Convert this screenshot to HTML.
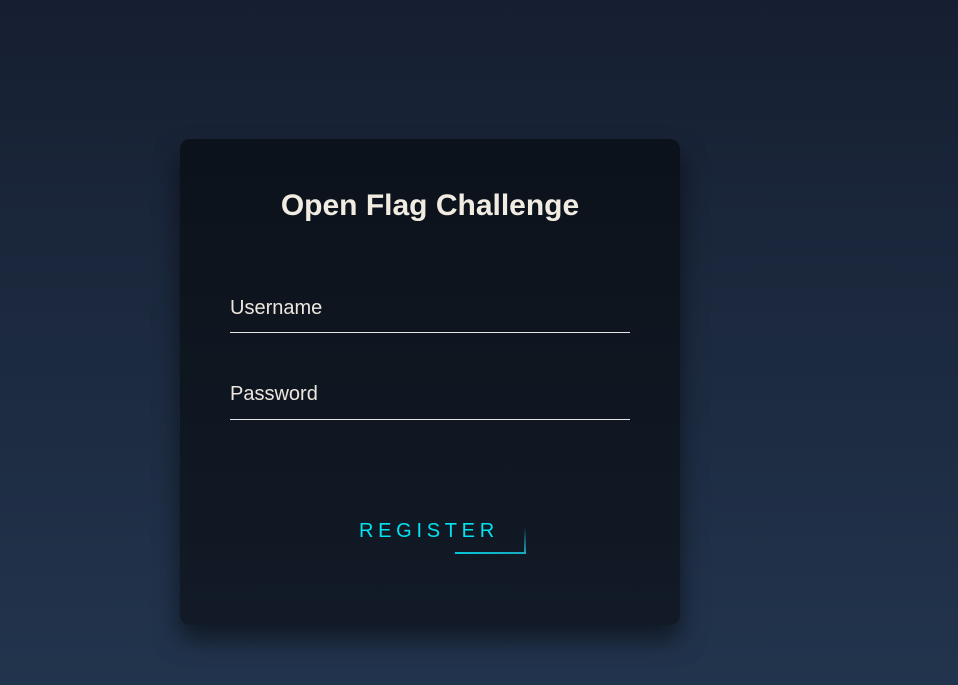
<!DOCTYPE html>
<html><head><style>
html,body{margin:0;padding:0;width:958px;height:685px;overflow:hidden}
body{background:linear-gradient(to bottom,#161f31,#22344d);font-family:"Liberation Sans",Arial,sans-serif;position:relative}
.card{position:absolute;left:180px;top:139px;width:500px;height:486px;border-radius:10px;background:linear-gradient(to bottom,#0c121b,#111a26);box-shadow:0 15px 25px rgba(0,0,0,.5)}
h2{position:absolute;left:180px;width:500px;top:189px;margin:0;text-align:center;color:#f1ece2;font-size:30px;font-weight:bold}
.lbl{position:absolute;left:230px;color:#ece7de;font-size:20px}
.line{position:absolute;left:230px;width:400px;height:1px;background:#e6e6e6}
.reg{position:absolute;left:359px;top:520px;color:#03e2f0;font-size:20px;letter-spacing:4.7px}
.b1{position:absolute;left:455px;top:552px;width:71px;height:2px;background:linear-gradient(to right,#03c6d8,#1aa8c0)}
.b2{position:absolute;left:524px;top:527px;width:2px;height:27px;background:linear-gradient(to bottom,rgba(3,233,244,0),#1aa8c0)}
</style></head><body>
<div class="card"></div>
<h2>Open Flag Challenge</h2>
<div class="lbl" style="top:297px">Username</div>
<div class="line" style="top:332px"></div>
<div class="lbl" style="top:383px">Password</div>
<div class="line" style="top:419px"></div>
<div class="reg">REGISTER</div>
<div class="b1"></div><div class="b2"></div>
</body></html>
